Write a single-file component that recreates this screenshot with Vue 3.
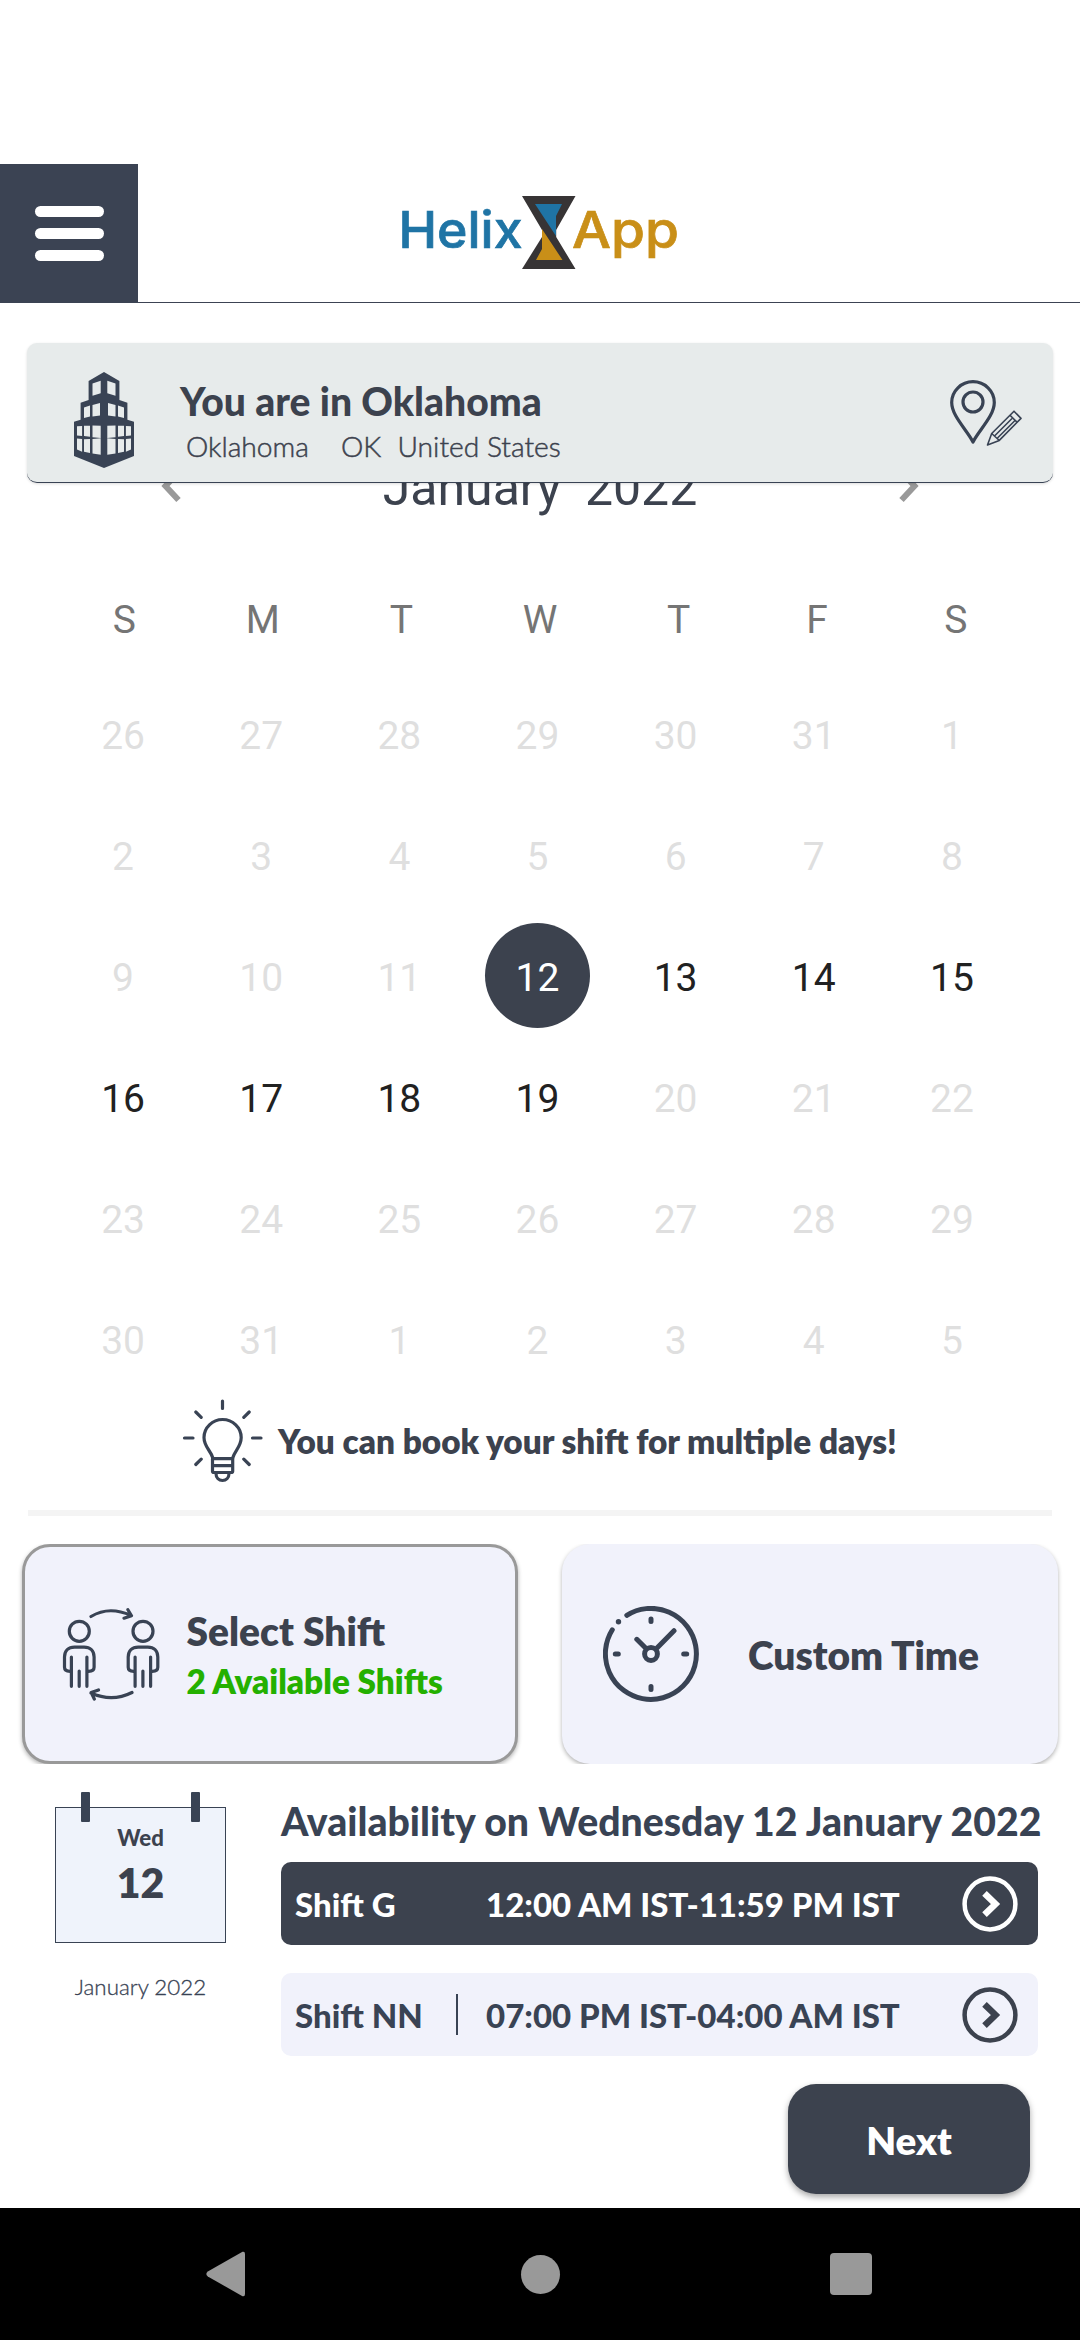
<script setup>
const weekdays = ['S', 'M', 'T', 'W', 'T', 'F', 'S']
const numbers = [
  26, 27, 28, 29, 30, 31, 1,
  2, 3, 4, 5, 6, 7, 8,
  9, 10, 11, 12, 13, 14, 15,
  16, 17, 18, 19, 20, 21, 22,
  23, 24, 25, 26, 27, 28, 29,
  30, 31, 1, 2, 3, 4, 5
]
const days = numbers.map((n, i) => ({
  n,
  state: i === 17 ? 'selected' : i > 17 && i < 25 ? 'open' : 'off'
}))
const shifts = [
  { name: 'Shift G', time: '12:00 AM IST-11:59 PM IST', active: true },
  { name: 'Shift NN', time: '07:00 PM IST-04:00 AM IST', active: false }
]
</script>

<template>
  <div class="screen">
    <header class="header">
      <button class="menu" aria-label="Menu"><i></i><i></i><i></i></button>
      <svg class="logo" width="280" height="76" viewBox="0 0 280 76">
        <text class="logo-text" x="-1.5" y="52.4" textLength="124" lengthAdjust="spacingAndGlyphs" fill="#1f74a5" stroke="#1f74a5">Helix</text>
        <text class="logo-text" x="172" y="52.4" textLength="107" lengthAdjust="spacingAndGlyphs" fill="#c98f18" stroke="#c98f18">App</text>
        <path fill="#373435" d="M122 0h53.5l-19.3 34v7l19.3 32H122l20-32v-7z" />
        <path fill="#1f74a5" d="M135 8h27l-6 12v20z" />
        <path fill="#c98f18" d="M142 33l20.5 31H136l6-11z" />
      </svg>
    </header>

    <section class="location">
      <svg class="building" width="60" height="96" viewBox="0 0 60 96">
        <path fill="#394354" d="M30 0l15.4 9v19l8 2.700v17l6.600 2V84L30 96 0 84V49.700l6.600-2v-17l8-2.700V9z" />
        <g id="halfWindows" fill="#e7ebeb">
          <path d="M18.500 11.500l8.200-2.800v12.600l-8.200 2.500zM10 35.500l6-2v11L10 46zM18.500 33l7.500-2v12.500l-7.500 1z" />
          <path d="M3 54.300l5.100-.3v10L3 63.500zM10 53.700h6v11l-6-.6zM18.500 53.500l8.200.2V66l-8.200-.7z" />
          <path d="M3 66.500l5.100.6v12.700L3 77.500zM10 67.200l6-.2v14l-6-1.200zM18.500 67l8.200-.8v16.500l-8.200-1.300z" />
        </g>
        <use href="#halfWindows" transform="translate(60 0) scale(-1 1)" />
      </svg>
      <div class="place">
        <h1>You are in Oklahoma</h1>
        <p><span class="city">Oklahoma</span><span class="region">OK</span><span>United States</span></p>
      </div>
      <svg class="pin" width="73" height="67" viewBox="0 0 73 67" fill="none" stroke="#394354">
        <path stroke-width="3.200" stroke-linejoin="round" d="M23 62C17 50 1.700 36 1.700 22.500a21.300 20.800 0 0 1 42.600 0C44.300 36 29 50 23 62z" />
        <circle cx="23" cy="22" r="10" stroke-width="3.200" />
        <path stroke-width="1.600" stroke-linejoin="round" d="M37.500 65l4.200-11.500L64 31.200l7 7.200-21.700 22zM41.700 53.500l7.600 7M60 35.200l7.200 7.200M44.500 56L62 38.500M47 58.500L65 40.500" />
      </svg>
    </section>

    <section class="calendar">
      <div class="month">
        <svg width="20" height="36" viewBox="0 0 20 36" fill="none" stroke="#999" stroke-width="6"><path d="M17.500 2L4.500 16l13 14" /></svg>
        <h2><span>January</span><span>2022</span></h2>
        <svg width="20" height="36" viewBox="0 0 20 36" fill="none" stroke="#999" stroke-width="6"><path d="M2.500 2l13 14-13 14" /></svg>
      </div>
      <div class="weekdays"><span v-for="(d, i) in weekdays" :key="i">{{ d }}</span></div>
      <div class="days">
        <div v-for="(d, i) in days" :key="i" class="day" :class="d.state"><span>{{ d.n }}</span></div>
      </div>
    </section>

    <div class="tip">
      <svg width="82" height="86" viewBox="0 0 82 86" fill="none" stroke="#394354" stroke-width="3.200" stroke-linecap="round">
        <path d="M40.500 3v7.500M2.500 40h8.500M70.500 40h8.500M13.800 14l5.400 5.300M67.200 14l-5.400 5.300M13.800 66.500l5.400-5.300M67.200 66.500l-5.400-5.300" />
        <path d="M31 60.500C29 52.500 22 49 22 39.500a18.600 18 0 0 1 37.200 0c0 9.500-6.700 13-8.700 21" />
        <path stroke-linejoin="round" d="M30.500 60.700h20.200v12.500a1.500 1.500 0 0 1-1.500 1.300H32a1.500 1.500 0 0 1-1.500-1.300zM30.500 67.700h20M34 75.500c0 4.500 3 7 6.500 7s6.500-2.500 6.500-7" />
      </svg>
      <p>You can book your shift for multiple days!</p>
    </div>

    <hr class="rule" />

    <section class="options">
      <div class="option chosen">
        <svg class="swap" width="98" height="94" viewBox="0 0 98 94" fill="none" stroke="#394354" stroke-width="3.200" stroke-linecap="round" stroke-linejoin="round">
          <g id="worker">
            <circle cx="17.300" cy="23.300" r="10" />
            <path d="M9.400 49v29.300M24.900 49v29.300M17.200 63v15.300M8 63.300c-3.500 0-5.500-1.300-5.500-4V49c0-6.500 4-9.800 10-9.800h9.600c6 0 10 3.300 10 9.800v10.300c0 2.700-2 4-5.500 4" />
          </g>
          <use href="#worker" x="63.700" />
          <path d="M29 8.500Q47-2.500 69 7.500M65.900 1.700l3.600 6-7.500 2.500M70 84.500q-20 10-41 .5M36.500 82L29.200 84.500l3.100 6.500" />
        </svg>
        <div class="option-text"><h3>Select Shift</h3><p>2 Available Shifts</p></div>
      </div>
      <div class="option">
        <svg class="clock" width="96" height="96" viewBox="0 0 96 96" fill="none" stroke="#394354" stroke-width="5" stroke-linecap="round">
          <path d="M23.800 9.300A45.500 45.500 0 1 1 9.300 23.800M48 13v2.500M48 80.500v3M12.300 48h3M80.700 48h3M71 24.700L53 43M33.800 33.300l9.500 9.500" />
          <circle cx="48" cy="48" r="6.400" />
          <circle cx="15.500" cy="15.700" r="2.700" fill="#394354" stroke="none" />
        </svg>
        <h3 class="custom">Custom Time</h3>
      </div>
    </section>

    <section class="availability">
      <div class="date">
        <div class="sheet">
          <i class="ring"></i><i class="ring right"></i>
          <b class="dow">Wed</b>
          <b class="dom">12</b>
        </div>
        <span class="caption">January 2022</span>
      </div>
      <div class="shifts">
        <h2>Availability on Wednesday 12 January 2022</h2>
        <div v-for="s in shifts" :key="s.name" class="shift" :class="{ active: s.active }">
          <span class="name">{{ s.name }}</span>
          <i class="bar"></i>
          <span class="time">{{ s.time }}</span>
          <svg width="56" height="56" viewBox="0 0 56 56" fill="none" stroke="currentColor">
            <circle cx="28" cy="28" r="25.400" stroke-width="4.500" />
            <path stroke-width="6.500" d="M22.500 17.300L33.500 28l-11 10.700" />
          </svg>
        </div>
      </div>
    </section>

    <div class="footer"><button class="next">Next</button></div>

    <nav class="navbar">
      <svg width="40" height="46" viewBox="0 0 40 46"><path fill="#999" d="M36.500.8Q39 0 39 3v40q0 3-2.500 2.200L1.800 25.500q-3-2.500 0-5z" /></svg>
      <i class="home"></i>
      <i class="recent"></i>
    </nav>
  </div>
</template>

<style>
body {
  margin: 0;
  background: #fff;
}
</style>

<style scoped>
* {
  box-sizing: border-box;
  margin: 0;
  padding: 0;
}
svg {
  display: block;
  flex: none;
}
.screen {
  width: 1080px;
  height: 2340px;
  padding-top: 164px;
  display: flex;
  flex-direction: column;
  overflow: hidden;
  background: #fff;
  color: #3c424e;
  font-family: Lato, "Liberation Sans", sans-serif;
}
button {
  border: 0;
  font: inherit;
}
.header {
  height: 139px;
  flex: none;
  display: flex;
  border-bottom: 1px solid #3c4353;
}
.menu {
  width: 138px;
  height: 139px;
  background: #3b4353;
  display: flex;
  flex-direction: column;
  align-items: center;
  justify-content: center;
  gap: 10.500px;
}
.menu i {
  width: 69px;
  height: 11.500px;
  border-radius: 6px;
  background: #fff;
}
.logo {
  margin: 32px 0 0 262px;
  overflow: visible;
}
.logo-text {
  font: 500 51px Inter, sans-serif;
  stroke-width: 0.7px;
}
.location {
  position: relative;
  z-index: 1;
  width: 1026px;
  height: 140px;
  flex: none;
  margin: 40px 0 0 27px;
  padding: 0 30px 0 47px;
  display: flex;
  align-items: flex-start;
  background: #e7ebeb;
  border-radius: 10px;
  border-bottom: 1px solid #394354;
  box-shadow: 0 1px 3px rgba(0, 0, 0, 0.14);
}
.building {
  margin-top: 29px;
}
.place {
  flex: 1;
  margin: 34px 0 0 46px;
  white-space: nowrap;
}
.place h1 {
  font-size: 39.100px;
  line-height: 48px;
  font-weight: 900;
}
.place p {
  display: flex;
  padding-left: 6px;
  margin-top: 4px;
  font-size: 28.200px;
  line-height: 35px;
  font-weight: 300;
  -webkit-text-stroke: 0.5px currentColor;
}
.city {
  width: 155px;
}
.region {
  width: 56.500px;
}
.pin {
  margin-top: 37px;
}
.calendar {
  margin-top: -25px;
  font-family: Roboto, sans-serif;
}
.month {
  height: 60px;
  padding: 0 161px;
  display: flex;
  justify-content: space-between;
  align-items: center;
}
.month h2 {
  display: flex;
  gap: 24px;
  font-size: 50px;
  line-height: 60px;
  font-weight: 400;
}
.weekdays {
  width: 970px;
  margin: 79px 0 32px 55px;
  display: grid;
  grid-template-columns: repeat(7, 1fr);
  font-size: 39px;
  line-height: 46px;
  text-align: center;
  color: #757575;
}
.days {
  width: 967px;
  margin-left: 54px;
  display: grid;
  grid-template-columns: repeat(7, 1fr);
  grid-auto-rows: 121px;
  font-size: 39px;
}
.day {
  display: flex;
  align-items: center;
  justify-content: center;
  color: #dfdfdf;
}
.day span {
  width: 105px;
  height: 105px;
  line-height: 111px;
  margin-bottom: 4px;
  border-radius: 50%;
  text-align: center;
}
.day.open {
  color: #212121;
}
.day.selected span {
  background: #3c424e;
  color: #fff;
}
.tip {
  height: 86px;
  flex: none;
  margin-top: -3px;
  padding-left: 182px;
  display: flex;
  gap: 14px;
}
.tip p {
  font-size: 33.350px;
  line-height: 86px;
  font-weight: 800;
  white-space: nowrap;
}
.rule {
  width: 1024px;
  height: 6px;
  flex: none;
  margin: 26px 0 28px 28px;
  border: 0;
  background: #f4f4f4;
}
.options {
  height: 220px;
  flex: none;
  padding: 0 22px;
  display: flex;
  justify-content: space-between;
  overflow: hidden;
}
.option {
  width: 496px;
  height: 220px;
  display: flex;
  align-items: flex-start;
  background: #f1f2fb;
  border-radius: 28px;
  box-shadow: 0 2px 4px rgba(0, 0, 0, 0.3);
  padding-left: 41px;
}
.option.chosen {
  border: 3px solid #999;
  padding-left: 37px;
}
.swap {
  margin-top: 61px;
}
.clock {
  margin-top: 62px;
}
.option-text {
  margin: 60px 0 0 26.500px;
  white-space: nowrap;
}
.option h3 {
  font-size: 38.900px;
  line-height: 48px;
  font-weight: 800;
}
.option-text p {
  margin-top: 6px;
  font-size: 33.300px;
  line-height: 40px;
  font-weight: 800;
  color: #24b000;
}
.option .custom {
  margin: 87px 0 0 49px;
  white-space: nowrap;
}
.availability {
  height: 292px;
  flex: none;
  display: flex;
}
.date {
  width: 171px;
  margin: 43px 55px 0 55px;
  display: flex;
  flex-direction: column;
  align-items: center;
}
.sheet {
  position: relative;
  width: 171px;
  height: 136px;
  padding-top: 15px;
  border: 1px solid #394354;
  background: #eff3fb;
  display: flex;
  flex-direction: column;
  align-items: center;
}
.ring {
  position: absolute;
  top: -16px;
  left: 25px;
  width: 9px;
  height: 30px;
  border-radius: 1px;
  background: #394354;
}
.ring.right {
  left: 135px;
}
.dow {
  font-size: 22.200px;
  line-height: 29px;
  font-weight: 900;
}
.dom {
  margin-top: 7px;
  font-size: 41px;
  line-height: 48px;
  font-weight: 800;
}
.caption {
  margin-top: 30px;
  font-size: 22.350px;
  line-height: 28px;
  font-weight: 300;
  color: #394354;
  -webkit-text-stroke: 0.3px currentColor;
}
.shifts {
  padding-top: 33px;
  white-space: nowrap;
  color: #394354;
}
.shifts h2 {
  margin-bottom: 17px;
  font-size: 39.200px;
  line-height: 48px;
  font-weight: 900;
}
.shift {
  width: 757px;
  height: 83px;
  margin-bottom: 28px;
  padding: 0 20px 0 14px;
  display: flex;
  align-items: center;
  border-radius: 10px;
  background: #f1f2fb;
  font-size: 33px;
  font-weight: 900;
}
.shift .name {
  width: 161px;
}
.bar {
  width: 2px;
  height: 41px;
  background: #394354;
}
.time {
  flex: 1;
  padding-left: 28px;
}
.shift.active {
  background: #3c424e;
  color: #fff;
}
.active .bar {
  background: transparent;
}
.shift svg {
  color: #3c424e;
}
.shift.active svg {
  color: #fff;
}
.footer {
  height: 152px;
  flex: none;
  padding: 28px 50px 0 0;
  display: flex;
  justify-content: flex-end;
  align-items: flex-start;
}
.next {
  width: 242px;
  height: 110px;
  border-radius: 28px;
  background: #3c424e;
  color: #fff;
  font-size: 38.600px;
  line-height: 112px;
  font-weight: 800;
  box-shadow: 0 3px 6px rgba(0, 0, 0, 0.35);
}
.navbar {
  height: 132px;
  flex: none;
  padding: 0 208px 0 206px;
  display: flex;
  align-items: center;
  justify-content: space-between;
  background: #000;
}
.home {
  width: 39px;
  height: 39px;
  margin-left: 5px;
  border-radius: 50%;
  background: #999;
}
.recent {
  width: 42px;
  height: 42px;
  border-radius: 4px;
  background: #999;
}
</style>
